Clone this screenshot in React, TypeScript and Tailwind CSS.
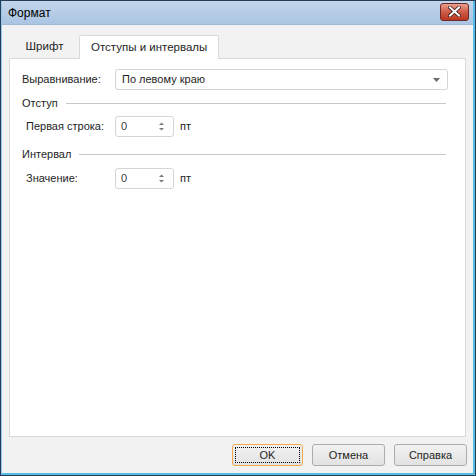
function Spinner({ value }: { value: string }) {
  return (
    <div className="flex items-center gap-[6px]">
      <div className="w-[59px] h-[21px] border border-[#d5d5d5] rounded-[3px] bg-white flex items-center justify-between pl-[5px] pr-[8px]">
        <span className="text-[#3a3a3a]">{value}</span>
        <svg width="7" height="11" viewBox="0 0 7 11">
          <path d="M3.5 1.5 L6 4 L1 4 Z" fill="#7a7a7a" />
          <path d="M3.5 9.5 L6 7 L1 7 Z" fill="#7a7a7a" />
        </svg>
      </div>
      <span>пт</span>
    </div>
  );
}

function Group({ title }: { title: string }) {
  return (
    <div className="flex items-center gap-[8px] h-[14px] pr-[2px]">
      <span>{title}</span>
      <div className="flex-1 h-px bg-[#c8c8c8]" />
    </div>
  );
}

export default function App() {
  return (
    <div
      className="w-[476px] h-[476px] flex flex-col bg-[#f2f2f2] border border-[#283c58] text-[11px] text-[#1e1e1e] overflow-hidden"
      style={{ fontFamily: '"Liberation Sans", Arial, sans-serif' }}
    >
      <div className="flex-1 flex flex-col border-l border-r-2 border-b-2 border-[#54bde6] border-l-[#8fc7e8]">
        {/* Title bar */}
        <div className="h-[24px] shrink-0 flex items-center justify-between pl-[6px] pr-[4px] bg-gradient-to-b from-[#c3d6eb] to-[#aac4e2] border-b border-[#9fb8d4]">
          <span className="text-[12px] text-black">Формат</span>
          <div className="w-[29px] h-[18px] mt-[-2px] rounded-[3px] border border-[#6b2a28] bg-gradient-to-b from-[#e8a08f] via-[#cf5b45] to-[#b8361f] flex items-center justify-center">
            <svg width="13" height="11" viewBox="0 0 13 11">
              <path d="M2 1.5 L11 9.5 M11 1.5 L2 9.5" stroke="#3b1a18" strokeWidth="3.6" strokeLinecap="square" />
              <path d="M2 1.5 L11 9.5 M11 1.5 L2 9.5" stroke="#ffffff" strokeWidth="2" strokeLinecap="square" />
            </svg>
          </div>
        </div>

        {/* Body */}
        <div className="flex-1 flex flex-col pl-[7px] pr-[7px] pt-[10px]">
          {/* Tabs */}
          <div className="flex items-end h-[23px] pl-[1px]">
            <div className="w-[69px] h-[22px] flex items-center justify-center text-[11.5px]">Шрифт</div>
            <div className="h-[24px] px-[11px] flex items-center bg-white border border-b-0 border-[#d9d9d9] rounded-t-[2px] mb-[-1px] relative z-10 text-[11.5px]">
              Отступы и интервалы
            </div>
          </div>
          <div className="h-[379px] bg-white border border-[#d9d9d9] flex flex-col pl-[12px] pr-[17px] pt-[10px]">
            <div className="flex items-center h-[21px]">
              <span className="w-[93px]">Выравнивание:</span>
              <div className="flex-1 h-[21px] border border-[#d5d5d5] rounded-[3px] flex items-center justify-between pl-[6px] pr-[7px]">
                <span>По левому краю</span>
                <svg width="7" height="4" viewBox="0 0 7 4">
                  <path d="M0 0 L7 0 L3.5 4 Z" fill="#6a6a6a" />
                </svg>
              </div>
            </div>
            <div className="mt-[6px]">
              <Group title="Отступ" />
            </div>
            <div className="flex items-center h-[21px] mt-[6px] pl-[4px]">
              <span className="w-[89px]">Первая строка:</span>
              <Spinner value="0" />
            </div>
            <div className="mt-[10px]">
              <Group title="Интервал" />
            </div>
            <div className="flex items-center h-[21px] mt-[7px] pl-[4px]">
              <span className="w-[89px]">Значение:</span>
              <Spinner value="0" />
            </div>
          </div>

          {/* Buttons */}
          <div className="flex justify-end gap-[9px] mt-[7px] mr-[-1px]">
            <button className="w-[71px] h-[22px] rounded-[3px] border border-[#f2a94a] bg-gradient-to-b from-[#f2f2f2] to-[#e2e2e2] p-[2px]">
              <div className="w-full h-full border border-dotted border-black flex items-center justify-center">OK</div>
            </button>
            <button className="w-[73px] h-[22px] rounded-[3px] border border-[#acacac] bg-gradient-to-b from-[#f2f2f2] to-[#e2e2e2]">
              Отмена
            </button>
            <button className="w-[73px] h-[22px] rounded-[3px] border border-[#acacac] bg-gradient-to-b from-[#f2f2f2] to-[#e2e2e2]">
              Справка
            </button>
          </div>
        </div>
      </div>
    </div>
  );
}
